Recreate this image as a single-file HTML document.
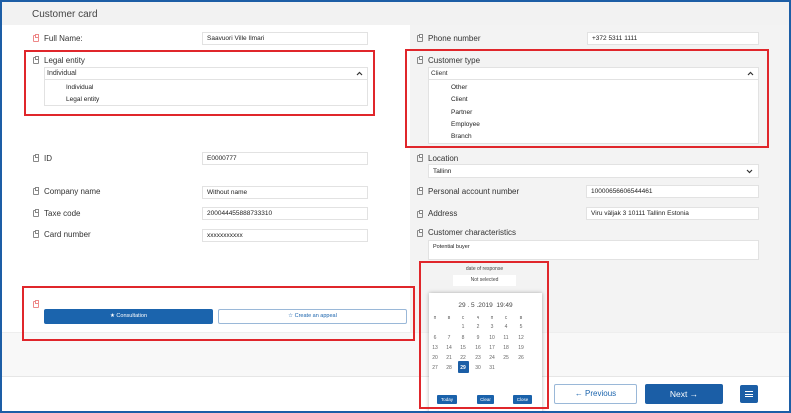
<!DOCTYPE html>
<html><head><meta charset="utf-8"><style>
*{box-sizing:border-box;margin:0;padding:0}
body{width:791px;height:413px;overflow:hidden;font-family:"Liberation Sans",sans-serif;background:#fff;position:relative;color:#333}
.a{position:absolute}
.lbl{position:absolute;font-size:8px;color:#333}
.inp{position:absolute;background:#fff;border:1px solid #e2e2e2;font-size:6.5px;padding:0 4px;height:13px;display:flex;align-items:center;color:#222}
.ic{position:absolute;width:6px;height:7px;border:1px solid #888;border-radius:1px}
.ic:before{content:"";position:absolute;left:1px;top:-2px;width:2px;height:2px;border:1px solid #888;background:#fff}
.red{border-color:#e88}.red:before{border-color:#e88}
.box{position:absolute;border:2px solid #e0262b}
.opt{position:absolute;font-size:6.5px;color:#222}
.cal{position:absolute;font-size:5px;color:#666;width:10px;text-align:center}
.btn{position:absolute;background:#1a62ab;color:#fff;font-size:4.5px;text-align:center;border-radius:1px;line-height:9px}
.sel{position:absolute;height:13px;border-bottom:1px solid #e2e2e2;display:flex;align-items:center;padding:0 3px}
</style></head><body>
<div class="a" style="left:0;top:0;width:791px;height:413px;border:2px solid #1d5ea6;z-index:10;pointer-events:none"></div>
<div class="a" style="left:0;top:0;width:791px;height:25px;background:#f2f2f2"></div>
<div class="a" style="left:32px;top:9px;font-size:10px;color:#444">Customer card</div>
<div class="a" style="left:410px;top:25px;width:381px;height:307px;background:#f3f3f3"></div>
<div class="a" style="left:0;top:332px;width:791px;height:44px;background:#f8f8f8;border-top:1px solid #eee"></div>
<div class="a" style="left:0;top:376px;width:791px;height:1px;background:#e6e6e6"></div>

<!-- left -->
<div class="ic red" style="left:33px;top:35px"></div><div class="lbl" style="left:44px;top:34px">Full Name:</div>
<div class="inp" style="left:202px;top:32px;width:166px">Saavuori Ville Ilmari</div>
<div class="box" style="left:24px;top:50px;width:351px;height:66px"></div>
<div class="ic" style="left:33px;top:57px"></div><div class="lbl" style="left:44px;top:56px">Legal entity</div>
<div class="inp" style="left:44px;top:67px;width:324px;height:39px;padding:0"></div>
<div class="sel" style="left:44px;top:67px;width:324px;font-size:7px">Individual</div>
<svg class="a" style="left:356px;top:71px" width="7" height="5"><path d="M1 4L3.5 1.5L6 4" stroke="#333" stroke-width="1.2" fill="none"/></svg>
<div class="opt" style="left:66px;top:84px">Individual</div>
<div class="opt" style="left:66px;top:96px">Legal entity</div>
<div class="ic" style="left:33px;top:155px"></div><div class="lbl" style="left:44px;top:154px">ID</div>
<div class="inp" style="left:202px;top:152px;width:166px">E0000777</div>
<div class="ic" style="left:33px;top:188px"></div><div class="lbl" style="left:44px;top:187px">Company name</div>
<div class="inp" style="left:202px;top:186px;width:166px">Without name</div>
<div class="ic" style="left:33px;top:210px"></div><div class="lbl" style="left:44px;top:209px">Taxe code</div>
<div class="inp" style="left:202px;top:207px;width:166px">200044455888733310</div>
<div class="ic" style="left:33px;top:231px"></div><div class="lbl" style="left:44px;top:230px">Card number</div>
<div class="inp" style="left:202px;top:229px;width:166px">xxxxxxxxxxx</div>
<div class="box" style="left:22px;top:286px;width:393px;height:55px"></div>
<div class="ic red" style="left:33px;top:301px"></div>
<div class="a" style="left:44px;top:309px;width:169px;height:15px;background:#1b64ad;border-radius:2px;color:#fff;font-size:5.5px;text-align:center;line-height:15px">&#9733; Consultation</div>
<div class="a" style="left:218px;top:309px;width:189px;height:15px;border:1px solid #9ab8d8;border-radius:2px;color:#1b64ad;font-size:5.5px;text-align:center;line-height:13px;background:#fff">&#9734; Create an appeal</div>

<!-- right -->
<div class="ic" style="left:417px;top:35px"></div><div class="lbl" style="left:428px;top:34px">Phone number</div>
<div class="inp" style="left:587px;top:32px;width:172px">+372 5311 1111</div>
<div class="box" style="left:405px;top:49px;width:364px;height:99px"></div>
<div class="ic" style="left:417px;top:57px"></div><div class="lbl" style="left:428px;top:56px">Customer type</div>
<div class="inp" style="left:428px;top:67px;width:331px;height:77px;padding:0"></div>
<div class="sel" style="left:428px;top:67px;width:331px;font-size:6.5px">Client</div>
<svg class="a" style="left:747px;top:71px" width="7" height="5"><path d="M1 4L3.5 1.5L6 4" stroke="#333" stroke-width="1.2" fill="none"/></svg>
<div class="opt" style="left:451px;top:84px">Other</div>
<div class="opt" style="left:451px;top:96px">Client</div>
<div class="opt" style="left:451px;top:109px">Partner</div>
<div class="opt" style="left:451px;top:121px">Employee</div>
<div class="opt" style="left:451px;top:133px">Branch</div>
<div class="ic" style="left:417px;top:155px"></div><div class="lbl" style="left:428px;top:154px">Location</div>
<div class="inp" style="left:428px;top:164px;width:331px;height:14px">Tallinn<svg style="position:absolute;right:5px;top:4px" width="7" height="5"><path d="M1 1L3.5 3.5L6 1" stroke="#333" stroke-width="1.2" fill="none"/></svg></div>
<div class="ic" style="left:417px;top:188px"></div><div class="lbl" style="left:428px;top:187px">Personal account number</div>
<div class="inp" style="left:586px;top:185px;width:173px">10000656606544461</div>
<div class="ic" style="left:417px;top:211px"></div><div class="lbl" style="left:428px;top:209px">Address</div>
<div class="inp" style="left:586px;top:207px;width:173px">Viru väljak 3 10111 Tallinn Estonia</div>
<div class="ic" style="left:417px;top:230px"></div><div class="lbl" style="left:428px;top:228px">Customer characteristics</div>
<div class="inp" style="left:428px;top:240px;width:331px;height:20px;font-size:5.5px;align-items:flex-start;padding-top:3px">Potential buyer</div>

<!-- date -->
<div class="box" style="left:419px;top:261px;width:130px;height:148px;z-index:5"></div>
<div class="a" style="left:453px;top:266px;width:63px;text-align:center;font-size:5px;color:#444">date of response</div>
<div class="a" style="left:453px;top:275px;width:63px;height:11px;background:#fff;text-align:center;font-size:5px;line-height:11px;color:#444">Not selected</div>
<div class="a" style="left:429px;top:293px;width:113px;height:120px;background:#fff;box-shadow:0 0 4px rgba(0,0,0,.3)"></div>
<div class="a" style="left:429px;top:302px;width:113px;text-align:center;font-size:6.5px;color:#444">29 . 5 .2019 &nbsp;19:49</div>
<div class="a" style="left:458px;top:361px;width:11px;height:12px;background:#1b5ea6;border-radius:1px"></div>
<div id="cal"></div>
<div class="btn" style="left:437px;top:395px;width:20px">Today</div>
<div class="btn" style="left:477px;top:395px;width:17px">Clear</div>
<div class="btn" style="left:513px;top:395px;width:19px">Close</div>

<div class="a" style="left:554px;top:384px;width:83px;height:20px;border:1px solid #9ab8d8;border-radius:2px;color:#1b64ad;font-size:8px;text-align:center;line-height:18px;background:#fff">&#8592; Previous</div>
<div class="a" style="left:645px;top:384px;width:78px;height:20px;background:#1b5ea6;border-radius:2px;color:#fff;font-size:8.5px;text-align:center;line-height:20px">Next &#8594;</div>
<div class="a" style="left:740px;top:385px;width:18px;height:18px;background:#1b5ea6;border-radius:2px"><div class="a" style="left:5px;top:6px;width:8px;height:6px;border-top:1px solid #fff;border-bottom:1px solid #fff"></div><div class="a" style="left:5px;top:8.5px;width:8px;height:1px;background:#fff"></div></div>

<script>
var xs=[435,449,463,478,492,506,521],h='';
var wd=['п','в','с','ч','п','с','в'];
for(var i=0;i<7;i++)h+='<div class="cal" style="left:'+(xs[i]-5)+'px;top:315px">'+wd[i]+'</div>';
var ys=[324,335,345,355,365],d=1;
for(var r=0;r<5;r++)for(var c=0;c<7;c++){if(r==0&&c<2)continue;if(d>31)break;
h+='<div class="cal" style="left:'+(xs[c]-5)+'px;top:'+ys[r]+'px;'+(d==29?'color:#fff;font-weight:bold;':'')+'">'+d+'</div>';d++;}
document.getElementById('cal').innerHTML=h;
</script>
</body></html>
